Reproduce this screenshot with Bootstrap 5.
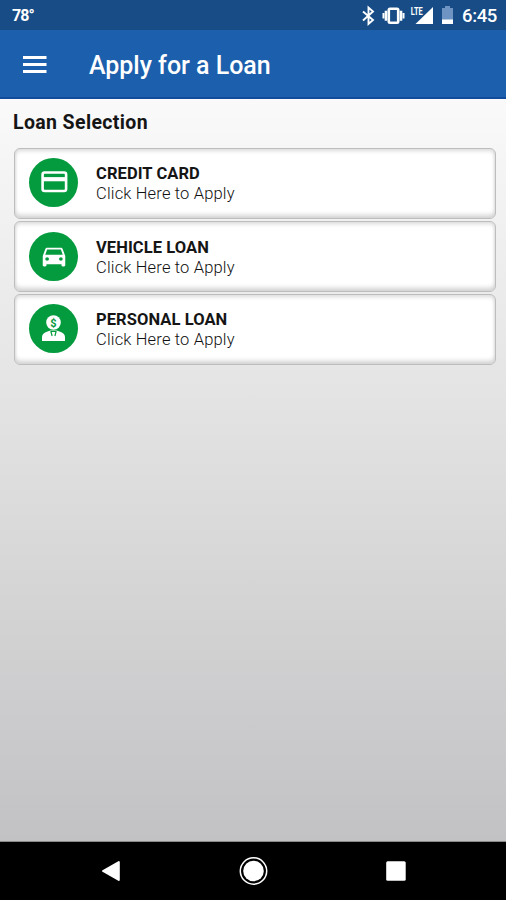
<!DOCTYPE html>
<html lang="en">
<head>
<meta charset="utf-8">
<meta name="viewport" content="width=device-width, initial-scale=1">
<title>Apply for a Loan</title>
<link href="https://cdn.jsdelivr.net/npm/bootstrap@5.3.0/dist/css/bootstrap.min.css" rel="stylesheet">
<style>
body{font-family:Roboto,sans-serif;color:#151515;line-height:1}
.screen{height:900px;overflow:hidden}
.status-bar{height:30px;background:#174c86;padding:1px 9px 0 12px}
.temp{font-size:16px;letter-spacing:-.9px}
.clock{font-size:18.5px;margin-left:5px;padding-top:2px;letter-spacing:-.35px;font-weight:500}
.app-bar{height:69px;background:#1c5fac;border-bottom:2px solid #114b9c;padding:2px 0 0 22px}
.app-title{font-size:25px;margin-left:41px;padding-top:3px;letter-spacing:-.03px}
.content{background:linear-gradient(#fafafa,#c2c2c4);padding:0 10px 0 14px;border-bottom:1px solid #8a8a8a}
.section-title{font-size:19.500px;letter-spacing:.37px;height:49.4px;padding-top:12px;margin-left:-1px}
.loan-list{gap:2px}
.loan{height:71px;border:1.5px solid #bdbdbd;border-radius:6px;background:#fff;box-shadow:inset 0 -4px 5px -1px #d2d2d2,inset 0 3px 4px -1px #dedede,inset 0 0 3px #ddd;padding:0 0 3px 14px;color:inherit}
.loan-vehicle{padding-bottom:1px}
.disc{width:49px;height:49px;background:#049b3e;margin-right:18px}
.loan-text{padding-top:3px}
.loan-name{font-size:16.5px;line-height:20px;letter-spacing:.08px}
.loan-hint{font-size:16.5px;line-height:20px;font-weight:300;letter-spacing:.17px;color:#111}
.nav-keys{height:58px;background:#000;padding:0 99px 0 100px}
</style>
<script src="https://cdn.jsdelivr.net/npm/bootstrap@5.3.0/dist/js/bootstrap.bundle.min.js"></script>
</head>
<body>
<div class="screen d-flex flex-column">
  <div class="status-bar d-flex align-items-center justify-content-between text-white">
    <span class="temp fw-bold">78°</span>
    <div class="d-flex align-items-center">
      <svg width="96" height="22" viewBox="361 5 96 22" fill="#fff">
        <path d="M363 11.500 373 20l-4.500 4V7.500L373 11.500 363 20.500" fill="none" stroke="#fff" stroke-width="1.900"/>
        <rect x="388.800" y="8.800" width="9.400" height="14" rx="1.200" fill="none" stroke="#fff" stroke-width="2.600"/>
        <path d="M386 10.800v10M401 10.800v10" stroke="#fff" stroke-width="2.600"/><path d="M383.500 13v5.600M403.500 13v5.600" stroke="#fff" stroke-width="2"/>
        <path d="M433 7v17H415.500z"/>
        <path d="M409 5h14v10h-14z" fill="#174c86"/>
        <text x="410.800" y="14.800" font-family="Roboto" font-weight="700" font-size="10" textLength="12" lengthAdjust="spacingAndGlyphs">LTE</text>
        <path d="M442 8h3V6h5v2h3v12h-11z" fill="#6e94c3"/>
        <path d="M442 19.500h11V24h-11z"/>
      </svg>
      <span class="clock">6:45</span>
    </div>
  </div>
  <header class="app-bar d-flex align-items-center text-white">
    <svg width="26" height="20" viewBox="0 0 26 20"><path d="M1 2.500h23.500M1 9.500h23.500M1 16.500h23.500" stroke="#fff" stroke-width="2.800"/></svg>
    <h1 class="app-title mb-0">Apply for a Loan</h1>
  </header>
  <main class="content flex-grow-1">
    <h2 class="section-title fw-bold mb-0">Loan Selection</h2>
    <div class="loan-list d-flex flex-column">
      <a href="#" class="loan d-flex align-items-center text-decoration-none">
        <span class="disc rounded-circle d-flex align-items-center justify-content-center">
          <svg width="28" height="24" viewBox="0 0 28 24"><rect x="2.600" y="2.500" width="23.500" height="18.500" rx="2" fill="none" stroke="#fff" stroke-width="2.600"/><path d="M3 9.200h23" stroke="#fff" stroke-width="4.200"/></svg>
        </span>
        <span class="loan-text"><strong class="loan-name d-block">CREDIT CARD</strong><span class="loan-hint d-block">Click Here to Apply</span></span>
      </a>
      <a href="#" class="loan loan-vehicle d-flex align-items-center text-decoration-none">
        <span class="disc rounded-circle d-flex align-items-center justify-content-center">
          <svg width="30" height="28" viewBox="0 0 24 24" preserveAspectRatio="none" fill="#fff"><path d="M18.920 6.010C18.720 5.420 18.160 5 17.500 5h-11c-.660 0-1.210.420-1.420 1.010L3 12v8c0 .550.450 1 1 1h1c.550 0 1-.450 1-1v-1h12v1c0 .550.450 1 1 1h1c.550 0 1-.450 1-1v-8zM6.500 16a1.500 1.500 0 1 1 0-3 1.500 1.500 0 0 1 0 3m11 0a1.500 1.500 0 1 1 0-3 1.500 1.500 0 0 1 0 3M5 11l1.500-4.500h11L19 11z"/></svg>
        </span>
        <span class="loan-text"><strong class="loan-name d-block">VEHICLE LOAN</strong><span class="loan-hint d-block">Click Here to Apply</span></span>
      </a>
      <a href="#" class="loan d-flex align-items-center text-decoration-none">
        <span class="disc rounded-circle d-flex align-items-center justify-content-center">
          <svg width="26" height="28" viewBox="0 0 26 28"><circle cx="12.500" cy="8.500" r="7.300" fill="#fff"/><path d="M1 27v-4q0-4 5.500-5.500l3-1h6l3 1q5.500 1.500 5.500 5.500v4z" fill="#fff"/><text x="12.300" y="12.500" text-anchor="middle" font-family="Roboto" font-weight="700" font-size="11" fill="#049b3e">$</text><path d="M9.800 17l1.300 5M15.200 17l-1.300 5M10.500 17.500h4" stroke="#049b3e" stroke-width="1.200"/></svg>
        </span>
        <span class="loan-text"><strong class="loan-name d-block">PERSONAL LOAN</strong><span class="loan-hint d-block">Click Here to Apply</span></span>
      </a>
    </div>
  </main>
  <nav class="nav-keys d-flex align-items-center justify-content-between">
    <svg width="22" height="24" viewBox="0 0 22 24"><path d="M18.800 3v18L3 12z" fill="#fff" stroke="#fff" stroke-width="2" stroke-linejoin="round"/></svg>
    <svg width="30" height="30" viewBox="0 0 30 30"><circle cx="14.500" cy="15" r="13.200" fill="none" stroke="#fff" stroke-width="1.500"/><circle cx="14.500" cy="15" r="10.300" fill="#fff"/></svg>
    <svg width="22" height="22" viewBox="0 0 22 22"><rect x="1.200" y="1.300" width="19.500" height="19.500" rx="1.500" fill="#fff"/></svg>
  </nav>
</div>
</body>
</html>
